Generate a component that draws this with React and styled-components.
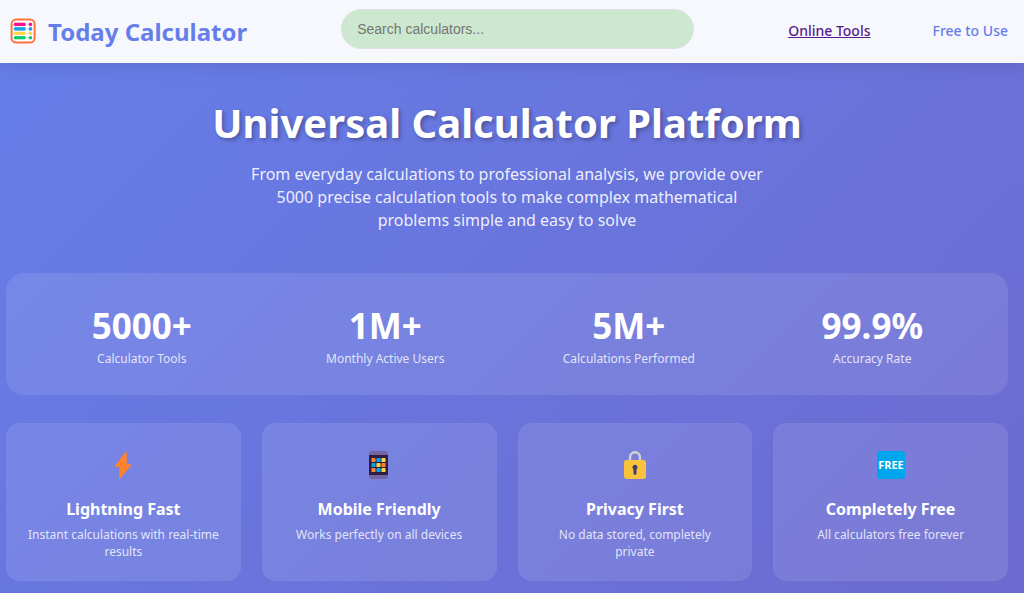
import React from "react";
import styled, { createGlobalStyle } from "styled-components";

const GlobalStyle = createGlobalStyle`
  *, *::before, *::after { box-sizing: border-box; }
  body {
    margin: 0;
    font-family: "Segoe UI", "Noto Sans", "Open Sans", sans-serif;
    color: #fff;
    background: #6c6bcf;
  }
  h1, h2, p, dl, dd, dt, ul { margin: 0; padding: 0; }
`;

const Page = styled.div`
  min-height: 100vh;
  overflow: hidden;
  background: linear-gradient(135deg, #667eea 0%, #6c6bcf 100%);
`;

const Header = styled.header`
  position: relative;
  display: flex;
  align-items: center;
  justify-content: space-between;
  padding: 9px 16px 10px 10px;
  background: #f7f8fe;
  box-shadow: 0 2px 18px rgba(0, 0, 0, 0.1);
`;

const Brand = styled.a`
  display: flex;
  align-items: center;
  gap: 12px;
  height: 44px;
  color: #667eea;
  font-size: 24px;
  font-weight: 700;
  text-decoration: none;
  white-space: nowrap;
`;

const Search = styled.input`
  flex: 0 1 353px;
  align-self: flex-start;
  min-width: 120px;
  height: 40px;
  padding: 0 15px;
  border: 1px solid #e0e0e0;
  border-radius: 20px;
  background: #cce8cf;
  color: #333;
  font-family: "Liberation Sans", Arial, sans-serif;
  font-size: 14px;
  outline: none;
  &::placeholder { color: #757575; opacity: 1; }
`;

const Nav = styled.nav`
  display: flex;
  align-items: center;
  gap: 62px;
  padding-bottom: 2px;
  font-size: 14px;
  font-weight: 500;
  white-space: nowrap;
`;

const NavLink = styled.a`
  color: #551a8b;
  text-decoration: underline;
`;

const NavNote = styled.span`
  color: #667eea;
`;

const Main = styled.main`
  padding: 32px 16px 12px 6px;
`;

const Hero = styled.section`
  text-align: center;
`;

const Title = styled.h1`
  font-size: 40px;
  line-height: 56px;
  font-weight: 700;
  text-shadow: 2px 2px 4px rgba(0, 0, 0, 0.3);
`;

const Lead = styled.p`
  max-width: 534px;
  margin: 12px auto 0;
  font-size: 16px;
  line-height: 23px;
  color: rgba(255, 255, 255, 0.9);
`;

const Stats = styled.dl`
  display: grid;
  grid-template-columns: repeat(4, 1fr);
  gap: 28px;
  margin-top: 41px;
  padding: 28px;
  border-radius: 18px;
  background: rgba(255, 255, 255, 0.1);
`;

const Stat = styled.div`
  display: flex;
  flex-direction: column-reverse;
  text-align: center;
`;

const StatValue = styled.dd`
  font-size: 35px;
  line-height: 50px;
  font-weight: 700;
`;

const StatLabel = styled.dt`
  font-size: 12px;
  line-height: 16px;
  color: rgba(255, 255, 255, 0.8);
`;

const Features = styled.ul`
  display: grid;
  grid-template-columns: repeat(4, 1fr);
  gap: 21px;
  margin-top: 28px;
  list-style: none;
`;

const Card = styled.li`
  display: flex;
  flex-direction: column;
  align-items: center;
  padding: 27px 20px 20px;
  border: 1px solid rgba(255, 255, 255, 0.02);
  border-radius: 14px;
  background: rgba(255, 255, 255, 0.1);
  text-align: center;
`;

const CardTitle = styled.h2`
  margin-top: 18px;
  font-size: 16px;
  line-height: 24px;
  font-weight: 700;
`;

const CardText = styled.p`
  margin-top: 5px;
  font-size: 12px;
  line-height: 17px;
  color: rgba(255, 255, 255, 0.8);
`;

const Icon = styled.svg`
  display: block;
  flex: none;
  width: ${({ $size = 28 }) => $size}px;
  height: ${({ $size = 28 }) => $size}px;
`;

const rows = [
  ["#f7118f", 6.4],
  ["#14a0e8", 10.9],
  ["#fcd53f", 15.3],
  ["#00cc6a", 19.7],
];

const Abacus = () => (
  <Icon $size={26} viewBox="0 0 26 26" aria-hidden="true">
    <rect x="1.6" y="1.6" width="23" height="23" rx="4.5" fill="#fff" stroke="#ff723d" strokeWidth="2" />
    {rows.map(([color, y]) => (
      <g key={y}>
        <path d={`M2.8 ${y}H23.4`} stroke="#cfd0d6" strokeWidth="0.6" />
        {[5.6, 7.7, 9.8, 11.9, 14, 20.4].map((x) => (
          <circle key={x} cx={x} cy={y} r="1.8" fill={color} />
        ))}
      </g>
    ))}
  </Icon>
);

const Bolt = () => (
  <Icon viewBox="0 0 28 28" aria-hidden="true">
    <path d="M16.8 1 5.8 15.6h4.9v12L22.4 13.7h-5.1V1.2z" fill="#ff822d" stroke="#ff822d" strokeWidth="0.8" strokeLinejoin="round" />
  </Icon>
);

const dots = ["#ff822d", "#00a6ed", "#fcd53f", "#00a6ed", "#fcd53f", "#ff822d", "#ff822d", "#00a6ed", "#fcd53f"];

const Phone = () => (
  <Icon viewBox="0 0 28 28" aria-hidden="true">
    <rect x="4" y="0" width="19" height="28" rx="3" fill="#7365a4" />
    <rect x="4" y="4" width="19" height="20" fill="#321b41" />
    {dots.map((color, i) => (
      <rect key={i} x={6.4 + (i % 3) * 5} y={6.9 + Math.floor(i / 3) * 5} width="4.2" height="4.2" rx="0.9" fill={color} />
    ))}
  </Icon>
);

const Lock = () => (
  <Icon viewBox="0 0 28 28" aria-hidden="true">
    <path d="M9 11V6.3a5 5 0 0 1 10 0V11" fill="none" stroke="#d3d3d3" strokeWidth="2.4" />
    <rect x="3" y="9" width="22" height="19" rx="2.4" fill="#f9c23c" />
    <path d="M14 13.8a2.6 2.6 0 0 0-1.5 4.7v3.7a1.5 1.5 0 0 0 3 0v-3.7a2.6 2.6 0 0 0-1.5-4.7z" fill="#433b6b" />
  </Icon>
);

const FreeText = styled.text`
  fill: #fff;
  font-family: "Noto Sans", sans-serif;
  font-size: 11px;
  font-weight: 700;
  text-anchor: middle;
`;

const FreeBadge = () => (
  <Icon viewBox="0 0 28 28" aria-hidden="true">
    <rect width="28" height="28" rx="3.4" fill="#00a6ed" />
    <FreeText x="14" y="18">FREE</FreeText>
  </Icon>
);

const stats = [
  ["5000+", "Calculator Tools"],
  ["1M+", "Monthly Active Users"],
  ["5M+", "Calculations Performed"],
  ["99.9%", "Accuracy Rate"],
];

const features = [
  [Bolt, "Lightning Fast", "Instant calculations with real-time results"],
  [Phone, "Mobile Friendly", "Works perfectly on all devices"],
  [Lock, "Privacy First", "No data stored, completely private"],
  [FreeBadge, "Completely Free", "All calculators free forever"],
];

export default function App() {
  return (
    <Page>
      <GlobalStyle />
      <Header>
        <Brand href="#home">
          <Abacus />
          Today Calculator
        </Brand>
        <Search type="search" placeholder="Search calculators..." aria-label="Search calculators" />
        <Nav>
          <NavLink href="#tools">Online Tools</NavLink>
          <NavNote>Free to Use</NavNote>
        </Nav>
      </Header>
      <Main>
        <Hero>
          <Title>Universal Calculator Platform</Title>
          <Lead>
            From everyday calculations to professional analysis, we provide over 5000 precise
            calculation tools to make complex mathematical problems simple and easy to solve
          </Lead>
        </Hero>
        <Stats>
          {stats.map(([value, label]) => (
            <Stat key={label}>
              <StatLabel>{label}</StatLabel>
              <StatValue>{value}</StatValue>
            </Stat>
          ))}
        </Stats>
        <Features>
          {features.map(([Glyph, title, text]) => (
            <Card key={title}>
              <Glyph />
              <CardTitle>{title}</CardTitle>
              <CardText>{text}</CardText>
            </Card>
          ))}
        </Features>
      </Main>
    </Page>
  );
}
